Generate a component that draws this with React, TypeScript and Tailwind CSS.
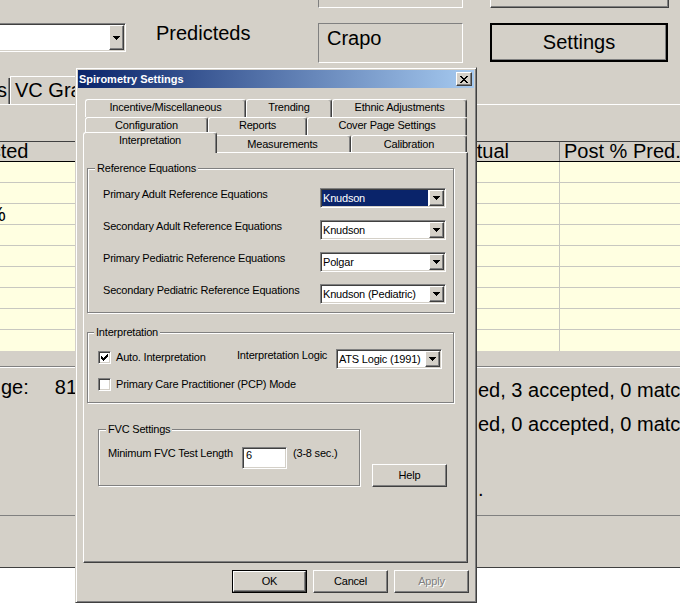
import React from "react";

// Classic 3D edge styles
const raised =
  "border border-t-white border-l-white border-r-[#404040] border-b-[#404040] shadow-[inset_-1px_-1px_0_#808080]";
const sunken =
  "border border-t-[#808080] border-l-[#808080] border-r-white border-b-white shadow-[inset_1px_1px_0_#404040,inset_-1px_-1px_0_#d4d0c8]";
const etched = "border border-[#808080] shadow-[1px_1px_0_#fff,inset_1px_1px_0_#fff]";

type Run = [number, number, number];

function Pixels({ w, h, rows }: { w: number; h: number; rows: Run[] }) {
  return (
    <svg width={w} height={h} viewBox={`0 0 ${w} ${h}`} shapeRendering="crispEdges">
      {rows.map(([x, y, len], i) => (
        <rect key={i} x={x} y={y} width={len} height={1} fill="#000" />
      ))}
    </svg>
  );
}

const ARROW: Run[] = [
  [0, 0, 7],
  [1, 1, 5],
  [2, 2, 3],
  [3, 3, 1],
];
const TICK: Run[] = [
  [6, 0, 1],
  [5, 1, 2],
  [0, 2, 1],
  [4, 2, 3],
  [0, 3, 2],
  [3, 3, 3],
  [0, 4, 5],
  [1, 5, 3],
  [2, 6, 1],
];
const CROSS: Run[] = [
  [0, 0, 2],
  [6, 0, 2],
  [1, 1, 2],
  [5, 1, 2],
  [2, 2, 4],
  [3, 3, 2],
  [2, 4, 4],
  [1, 5, 2],
  [5, 5, 2],
  [0, 6, 2],
  [6, 6, 2],
];

function Combo({ value, className, selected }: { value: string; className: string; selected?: boolean }) {
  return (
    <div className={`${className} h-[20px] flex p-[1px] bg-white ${sunken}`}>
      <div
        className={`flex-1 mr-[1px] flex items-center pl-[1px] leading-[13px] whitespace-nowrap overflow-hidden ${
          selected ? "bg-[#0a246a] text-white" : ""
        }`}
      >
        {value}
      </div>
      <div className={`w-[15px] h-full bg-[#d4d0c8] flex items-center justify-center ${raised}`}>
        <Pixels w={7} h={4} rows={ARROW} />
      </div>
    </div>
  );
}

function CheckBox({ on }: { on?: boolean }) {
  return (
    <div className={`w-[13px] h-[13px] shrink-0 bg-white flex items-center justify-center ${sunken}`}>
      {on && <Pixels w={7} h={7} rows={TICK} />}
    </div>
  );
}

function Button({ label, isDefault, disabled }: { label: string; isDefault?: boolean; disabled?: boolean }) {
  const face = (
    <div
      className={`w-full h-full flex items-center justify-center bg-[#d4d0c8] ${raised} ${
        disabled ? "text-[#808080] [text-shadow:1px_1px_0_#fff]" : ""
      }`}
    >
      {label}
    </div>
  );
  return <div className={`w-[75px] h-[23px] ${isDefault ? "border border-black" : ""}`}>{face}</div>;
}

function Tab({ label, className }: { label: string; className: string }) {
  return (
    <div
      className={`${className} h-[18px] bg-[#d4d0c8] border-l border-t border-r border-l-white border-t-white border-r-[#404040] shadow-[inset_-1px_0_0_#808080] rounded-t-[3px] flex justify-center pt-[1px] leading-[13px] whitespace-nowrap`}
    >
      {label}
    </div>
  );
}

function GroupLabel({ text, className }: { text: string; className: string }) {
  return <div className={`${className} -mt-[7px] w-fit px-[2px] bg-[#d4d0c8] leading-[13px]`}>{text}</div>;
}

const equations: [string, string, boolean][] = [
  ["Primary Adult Reference Equations", "Knudson", true],
  ["Secondary Adult Reference Equations", "Knudson", false],
  ["Primary Pediatric Reference Equations", "Polgar", false],
  ["Secondary Pediatric Reference Equations", "Knudson (Pediatric)", false],
];

function SettingsDialog() {
  return (
    <div className="absolute left-[75px] top-[67px] w-[402px] h-[536px] bg-[#d4d0c8] p-[2px] flex flex-col text-[11px] tracking-[-0.2px] text-black border border-t-[#d4d0c8] border-l-[#d4d0c8] border-r-[#404040] border-b-[#404040] shadow-[inset_1px_1px_0_#fff,inset_-1px_-1px_0_#808080]">
      {/* title bar */}
      <div className="h-[18px] shrink-0 flex items-center pl-[1px] pr-[2px] bg-[linear-gradient(to_right,#0a246a,#a6caf0)]">
        <span className="text-white font-bold tracking-normal leading-[13px]">Spirometry Settings</span>
        <div className={`ml-auto w-[16px] h-[14px] bg-[#d4d0c8] flex items-center justify-center ${raised}`}>
          <Pixels w={8} h={7} rows={CROSS} />
        </div>
      </div>

      {/* tab control */}
      <div className="mt-[11px] ml-[5px] w-[385px] flex flex-col">
        <div className="ml-[2px] w-[382px] flex">
          <Tab label="Incentive/Miscellaneous" className="w-[161px]" />
          <Tab label="Trending" className="w-[86px]" />
          <Tab label="Ethnic Adjustments" className="w-[135px]" />
        </div>
        <div className="ml-[2px] w-[382px] flex">
          <Tab label="Configuration" className="w-[123px]" />
          <Tab label="Reports" className="w-[99px]" />
          <Tab label="Cover Page Settings" className="w-[160px]" />
        </div>
        <div className="ml-[2px] w-[382px] h-[17px] flex items-end">
          <div className="relative z-10 -ml-[2px] -mr-[2px] -mb-[1px] w-[134px] h-[21px] bg-[#d4d0c8] border-l border-t border-r border-l-white border-t-white border-r-[#404040] shadow-[inset_-1px_0_0_#808080] rounded-t-[3px] flex justify-center pt-[1px] leading-[13px]">
            Interpretation
          </div>
          <div className="w-[136px] h-[17px] bg-[#d4d0c8] border-t border-r border-t-white border-r-[#404040] shadow-[inset_-1px_0_0_#808080] rounded-tr-[3px] flex justify-center pt-[2px] leading-[13px]">
            Measurements
          </div>
          <div className="w-[116px] h-[17px] bg-[#d4d0c8] border-l border-t border-r border-l-white border-t-white border-r-[#404040] shadow-[inset_-1px_0_0_#808080] rounded-t-[3px] flex justify-center pt-[2px] leading-[13px]">
            Calibration
          </div>
        </div>

        {/* tab page */}
        <div className="h-[411px] border border-t-white border-l-white border-r-[#404040] border-b-[#404040] shadow-[inset_-1px_-1px_0_#808080] pl-[3px] pt-[15px] flex flex-col">
          {/* Reference Equations */}
          <div className={`w-[367px] h-[145px] flex flex-col ${etched}`}>
            <GroupLabel text="Reference Equations" className="ml-[7px]" />
            <div className="mt-[13px] pl-[15px] flex flex-col gap-[12px]">
              {equations.map(([label, value, sel]) => (
                <div key={label} className="flex items-start">
                  <div className="w-[217px] leading-[13px] whitespace-nowrap">{label}</div>
                  <Combo value={value} selected={sel} className="w-[126px]" />
                </div>
              ))}
            </div>
          </div>

          {/* Interpretation */}
          <div className={`mt-[19px] w-[367px] h-[71px] flex flex-col ${etched}`}>
            <GroupLabel text="Interpretation" className="ml-[6px]" />
            <div className="mt-[10px] pl-[10px] flex items-start">
              <div className="w-[139px] mt-[2px] flex items-center gap-[5px]">
                <CheckBox on />
                <span className="leading-[13px] whitespace-nowrap">Auto. Interpretation</span>
              </div>
              <div className="w-[99px] leading-[13px] whitespace-nowrap">Interpretation Logic</div>
              <Combo value="ATS Logic (1991)" className="w-[106px]" />
            </div>
            <div className="mt-[9px] pl-[10px] flex items-center gap-[5px]">
              <CheckBox />
              <span className="leading-[13px] whitespace-nowrap">Primary Care Practitioner (PCP) Mode</span>
            </div>
          </div>

          {/* FVC settings and help */}
          <div className="mt-[26px] flex items-start">
            <div className={`ml-[11px] w-[262px] h-[57px] flex flex-col ${etched}`}>
              <GroupLabel text="FVC Settings" className="ml-[7px]" />
              <div className="mt-[11px] pl-[9px] flex items-start">
                <div className="w-[134px] leading-[13px] whitespace-nowrap">Minimum FVC Test Length</div>
                <div className={`w-[45px] h-[22px] bg-white pl-[3px] pt-[1px] leading-[13px] ${sunken}`}>6</div>
                <div className="ml-[6px] leading-[13px] whitespace-nowrap">(3-8 sec.)</div>
              </div>
            </div>
            <div className="ml-[12px] mt-[35px]">
              <Button label="Help" />
            </div>
          </div>
        </div>
      </div>

      {/* dialog buttons */}
      <div className="mt-[7px] mr-[5px] flex justify-end gap-[6px]">
        <Button label="OK" isDefault />
        <Button label="Cancel" />
        <Button label="Apply" disabled />
      </div>
    </div>
  );
}

const cols = ["-ml-[60px] w-[260px]", "w-[205px]", "w-[155px]", "flex-1"];
const headers = ["Predicted", "Pre % Pred.", "Post Actual", "Post % Pred."];

function ResultsTable() {
  return (
    <div className="flex flex-col">
      <div className="h-[21px] flex border-t border-b border-t-[#404040] border-b-black bg-[#d4d0c8]">
        {headers.map((h, i) => (
          <div
            key={h}
            className={`${cols[i]} pl-[4px] leading-[19px] whitespace-nowrap overflow-hidden ${
              i < 3 ? "border-r border-r-[#808080]" : ""
            }`}
          >
            {h}
          </div>
        ))}
      </div>
      {Array.from({ length: 9 }).map((_, r) => (
        <div key={r} className={`h-[21px] flex bg-[#ffffe1] ${r < 8 ? "border-b border-b-[#c8c8c0]" : ""}`}>
          {cols.map((c, i) => (
            <div key={i} className={`${c} leading-[20px] ${i < 3 ? "border-r border-r-[#c8c8c0]" : ""}`}>
              {r === 2 && i === 0 ? <span className="ml-[48px]">%</span> : null}
            </div>
          ))}
        </div>
      ))}
    </div>
  );
}

export default function App() {
  return (
    <div className="relative w-[680px] h-[614px] overflow-hidden bg-[#d4d0c8] font-['Liberation_Sans',Arial,sans-serif] text-black text-[20px] leading-[23px]">
      <div className="flex flex-col">
        {/* bottoms of the upper controls */}
        <div className="flex h-[8px]">
          <div className="ml-[318px] w-[145px] h-full border-l border-r border-b border-l-[#808080] border-r-white border-b-white" />
          <div className="ml-[27px] w-[179px] h-full border-l border-r border-b border-l-white border-r-[#404040] border-b-[#404040] shadow-[inset_-1px_-1px_0_#808080]" />
        </div>

        {/* predicted set selector */}
        <div className="mt-[15px] h-[40px] flex items-start">
          <div className={`-ml-[4px] w-[130px] h-[29px] flex p-[1px] bg-white ${sunken}`}>
            <div className="flex-1" />
            <div className={`w-[15px] h-full bg-[#d4d0c8] flex items-center justify-center ${raised}`}>
              <Pixels w={7} h={4} rows={ARROW} />
            </div>
          </div>
          <div className="ml-[30px] w-[162px] -mt-[1px]">Predicteds</div>
          <div className={`w-[145px] h-[40px] pl-[8px] pt-[3px] border border-t-[#808080] border-l-[#808080] border-r-white border-b-white`}>
            Crapo
          </div>
          <div className="ml-[27px] w-[178px] h-[39px] border-2 border-black shadow-[inset_-1px_-1px_0_#808080] flex items-center justify-center">
            Settings
          </div>
        </div>

        {/* page tabs */}
        <div className="mt-[13px] h-[28px] flex items-end">
          <div className="w-[10px] h-[26px] border-r border-r-[#404040] shadow-[inset_-1px_0_0_#808080] flex justify-end pr-[2px] pt-[1px] overflow-hidden">
            s
          </div>
          <div className="w-[160px] h-[28px] border-l border-t border-l-white border-t-white pl-[4px] pt-[2px] whitespace-nowrap">
            VC Graph
          </div>
        </div>
        <div className="h-[37px] border-t border-t-white" />

        <ResultsTable />

        <div className="h-[15px]" />
        <div className="border-t border-t-[#808080]" />
        <div className="border-t border-t-white" />

        {/* session summary */}
        <div className="h-[147px] flex flex-col">
          <div className="mt-[8px] flex items-start whitespace-nowrap">
            <div className="w-[478px] shrink-0 flex">
              <span className="ml-[1px]">ge:</span>
              <span className="ml-[26px]">81</span>
            </div>
            <span className="shrink-0 mt-[3px]">ed, 3 accepted, 0 matching</span>
          </div>
          <div className="mt-[11px] ml-[478px] whitespace-nowrap">ed, 0 accepted, 0 matching</div>
          <div className="mt-[42px] ml-[478px]">.</div>
        </div>

        <div className="h-[52px] border-t border-t-[#808080]" />
        <div className="h-[47px] border-t border-t-[#404040] bg-white" />
      </div>

      <SettingsDialog />
    </div>
  );
}
